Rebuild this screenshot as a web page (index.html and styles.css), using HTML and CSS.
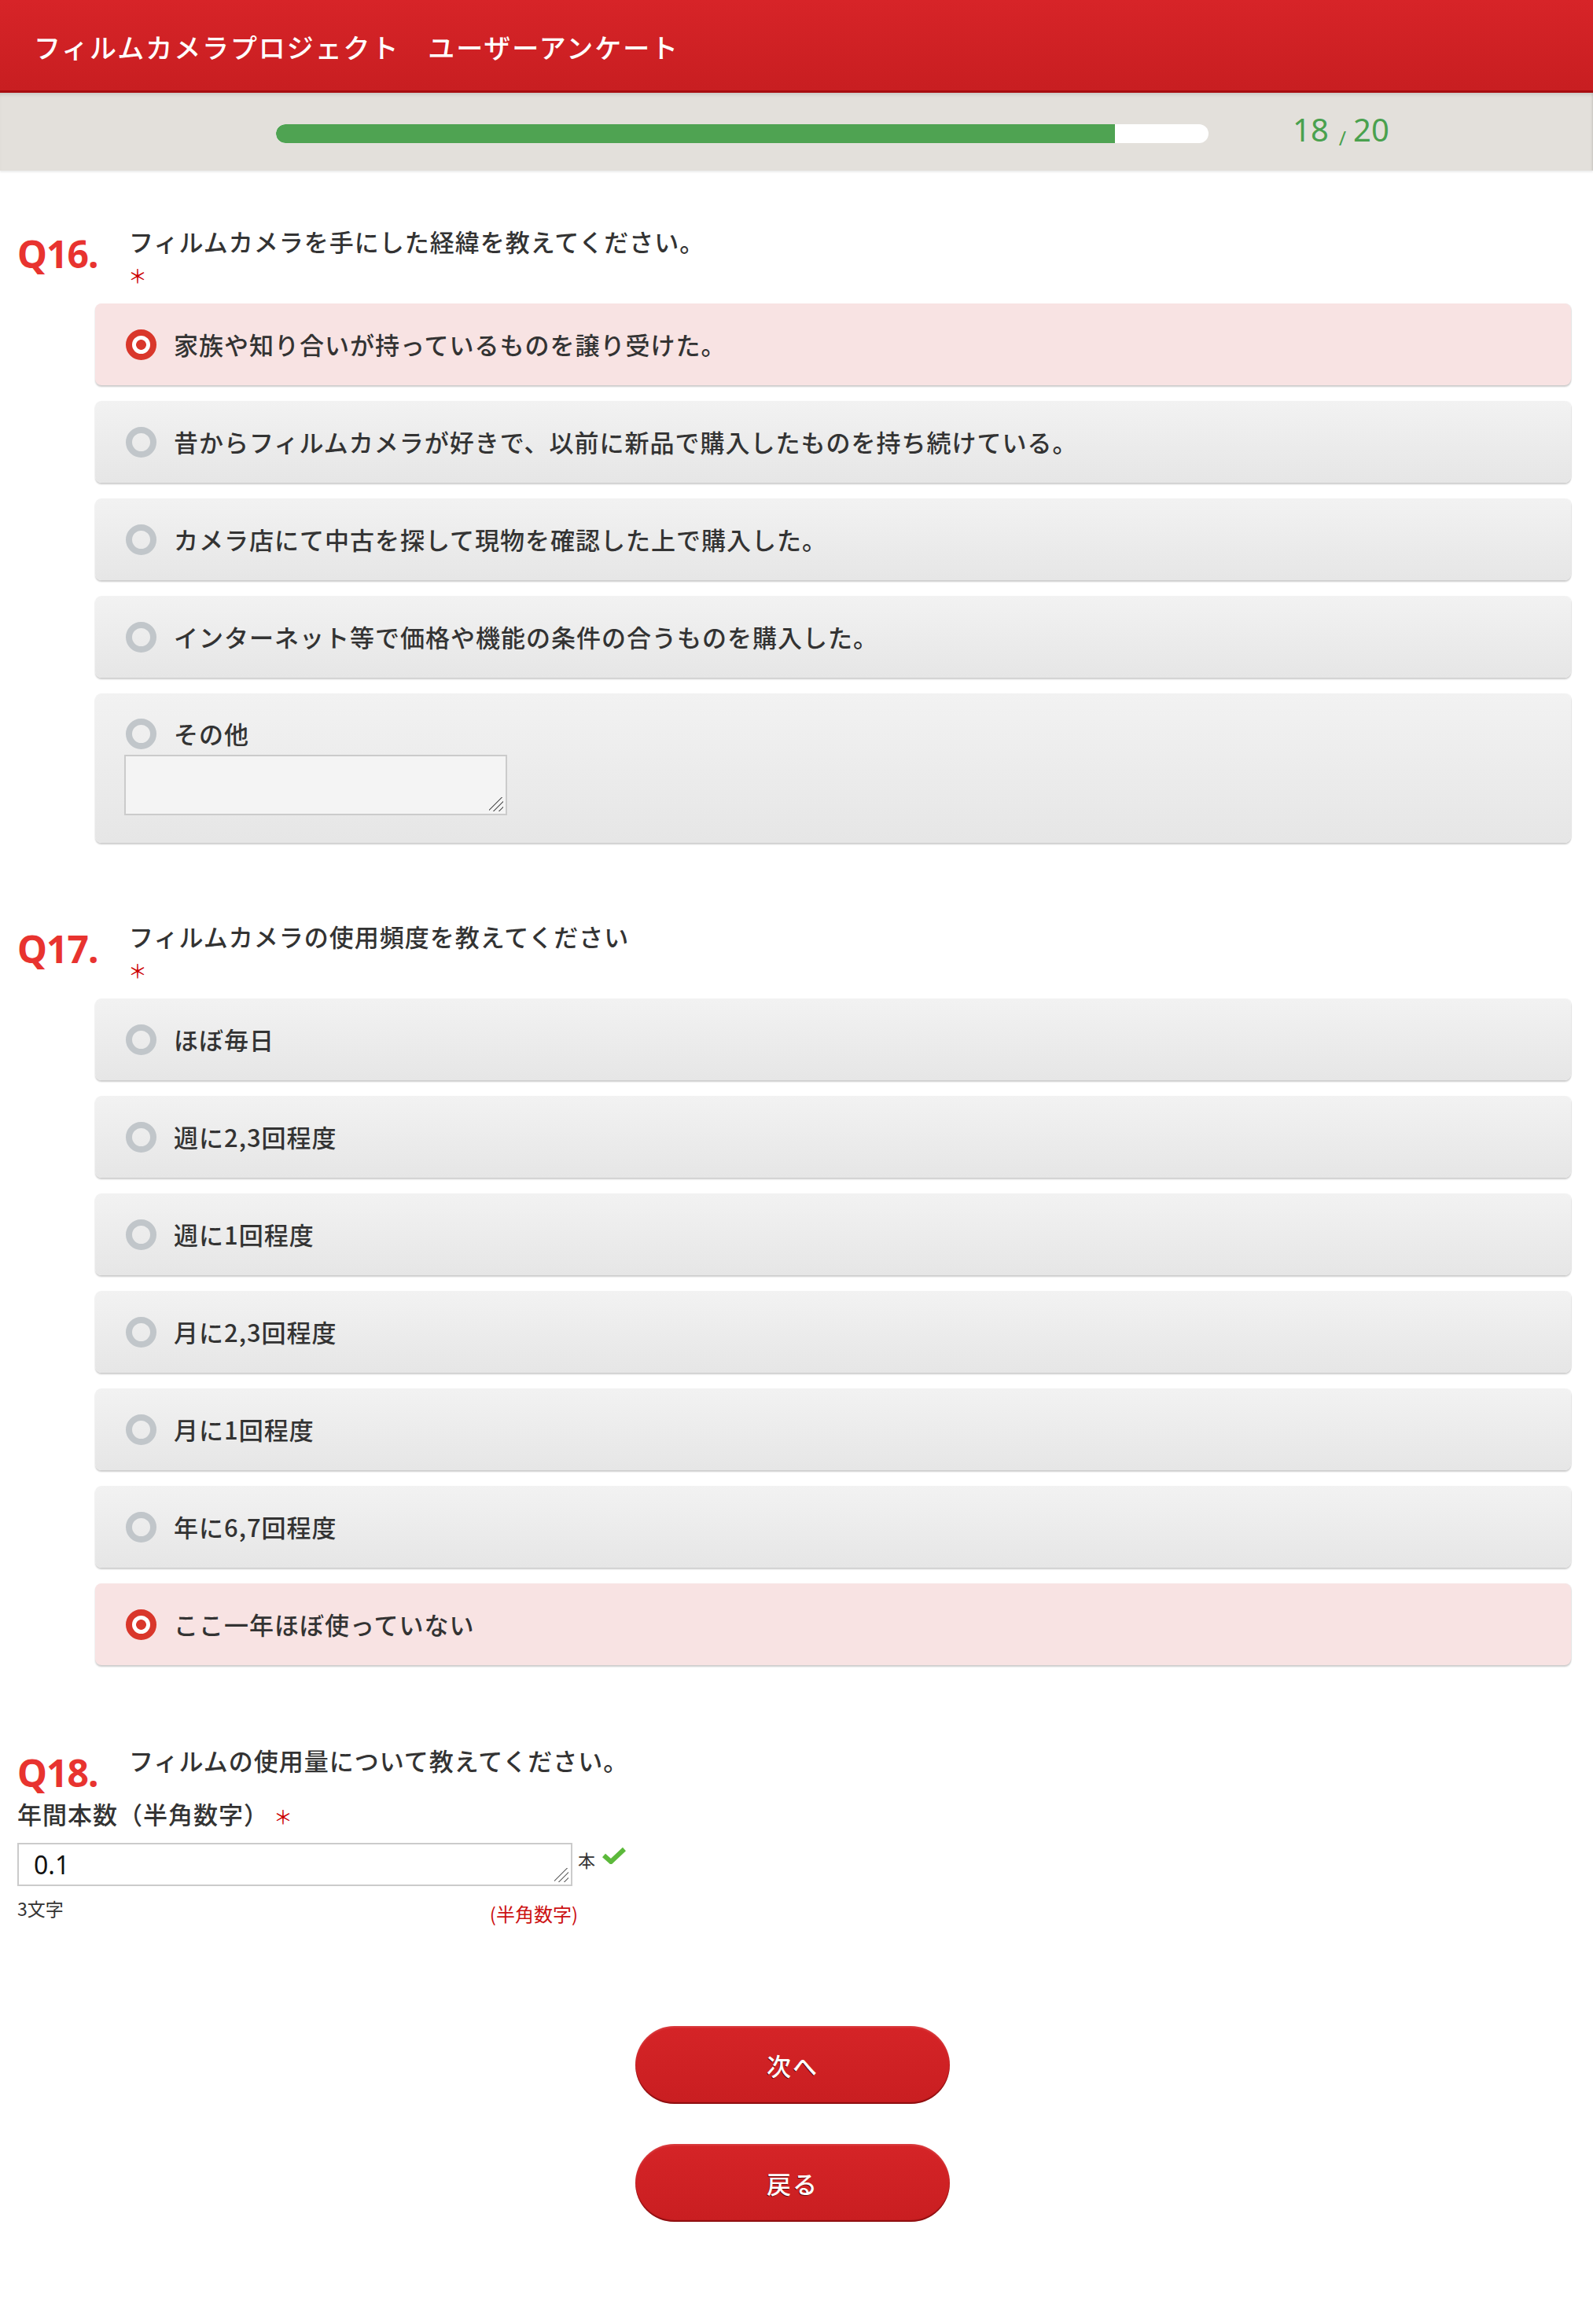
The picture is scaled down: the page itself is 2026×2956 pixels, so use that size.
FILE: index.html
```html
<!DOCTYPE html>
<html lang="ja">
<head>
<meta charset="utf-8">
<title>フィルムカメラプロジェクト ユーザーアンケート</title>
<link rel="stylesheet" href="styles.css">
</head>
<body>
<header class="top">
  <h1 class="title">フィルムカメラプロジェクト　ユーザーアンケート</h1>
</header>
<div class="progress-band">
  <div class="bar"><div class="fill" style="width:90%"></div></div>
  <div class="count">18<span class="slash">/</span>20</div>
</div>

<main class="main">
  <section class="q q-first">
    <div class="q-head">
      <div class="q-num">Q16.</div>
      <div class="q-col">
        <div class="q-text">フィルムカメラを手にした経緯を教えてください。</div>
        <div class="req">＊</div>
      </div>
    </div>
    <div class="options">
      <div class="opt sel"><span class="radio"></span><span class="opt-text">家族や知り合いが持っているものを譲り受けた。</span></div>
      <div class="opt"><span class="radio"></span><span class="opt-text">昔からフィルムカメラが好きで、以前に新品で購入したものを持ち続けている。</span></div>
      <div class="opt"><span class="radio"></span><span class="opt-text">カメラ店にて中古を探して現物を確認した上で購入した。</span></div>
      <div class="opt"><span class="radio"></span><span class="opt-text">インターネット等で価格や機能の条件の合うものを購入した。</span></div>
      <div class="opt opt-other">
        <div class="other-row"><span class="radio"></span><span class="opt-text">その他</span></div>
        <textarea class="other-box"></textarea>
      </div>
    </div>
  </section>

  <section class="q">
    <div class="q-head">
      <div class="q-num">Q17.</div>
      <div class="q-col">
        <div class="q-text">フィルムカメラの使用頻度を教えてください</div>
        <div class="req">＊</div>
      </div>
    </div>
    <div class="options">
      <div class="opt"><span class="radio"></span><span class="opt-text">ほぼ毎日</span></div>
      <div class="opt"><span class="radio"></span><span class="opt-text">週に2,3回程度</span></div>
      <div class="opt"><span class="radio"></span><span class="opt-text">週に1回程度</span></div>
      <div class="opt"><span class="radio"></span><span class="opt-text">月に2,3回程度</span></div>
      <div class="opt"><span class="radio"></span><span class="opt-text">月に1回程度</span></div>
      <div class="opt"><span class="radio"></span><span class="opt-text">年に6,7回程度</span></div>
      <div class="opt sel"><span class="radio"></span><span class="opt-text">ここ一年ほぼ使っていない</span></div>
    </div>
  </section>

  <section class="q q-last">
    <div class="q-head">
      <div class="q-num">Q18.</div>
      <div class="q-col">
        <div class="q-text">フィルムの使用量について教えてください。</div>
      </div>
    </div>
    <div class="sub-label">年間本数（半角数字）<span class="req-inline">＊</span></div>
    <div class="input-row">
      <textarea class="num-box">0.1</textarea>
      <span class="unit">本</span>
      <svg class="check" width="30" height="22" viewBox="0 0 30 22"><polyline points="2,11 11,19 28,3" fill="none" stroke="#5cb93b" stroke-width="6" stroke-linejoin="miter"/></svg>
    </div>
    <div class="hint-row">
      <span class="hint">3文字</span>
      <span class="hint-red">(半角数字)</span>
    </div>
  </section>

  <div class="buttons">
    <button class="btn" type="button">次へ</button>
    <button class="btn" type="button">戻る</button>
  </div>
</main>
</body>
</html>
```

FILE: styles.css
```css
* { box-sizing: border-box; }
html, body { margin: 0; padding: 0; background: #fff; }
body {
  font-family: "Noto Sans CJK JP", "Noto Sans", sans-serif;
  color: #333;
  width: 2026px;
}

.top {
  height: 118px;
  background: linear-gradient(#d72428, #c81e21);
  border-bottom: 3px solid #a80d10;
  display: flex;
  align-items: center;
  padding-left: 43px;
}
.title {
  margin: 0;
  padding-top: 4px;
  font-weight: 500;
  font-size: 34px;
  letter-spacing: 1.9px;
  color: #fff;
}

.progress-band {
  height: 99px;
  background: #e3e0db;
  box-shadow: inset 0 5px 5px -3px rgba(0,0,0,0.12), inset -3px 0 3px -2px rgba(0,0,0,0.12), 0 2px 2px rgba(0,0,0,0.08);
  display: flex;
  align-items: center;
  padding-left: 351px;
  padding-top: 4px;
}
.bar {
  width: 1186px;
  height: 24px;
  border-radius: 12px;
  background: #fff;
  overflow: hidden;
}
.fill {
  height: 100%;
  background: #4fa352;
  border-radius: 12px 0 0 12px;
}
.count {
  margin-left: 107px;
  color: #4aa14e;
  font-family: "Noto Sans", sans-serif;
  font-size: 40px;
  line-height: 42px;
  margin-top: -4px;
}
.slash {
  font-size: 25px;
  margin: 0 9px 0 13px;
  position: relative;
  top: 5px;
}

.main { padding-right: 28px; }
.q { margin-top: 98px; }
.q-first { margin-top: 69px; }
.q-last { margin-top: 100px; }

.q-head {
  display: flex;
  align-items: flex-start;
  padding-left: 22px;
}
.q-num {
  width: 142px;
  flex: none;
  font-family: "Noto Sans", sans-serif;
  font-weight: 700;
  font-size: 48px;
  line-height: 42px;
  padding-top: 16px;
  color: #e8332f;
  letter-spacing: -1px;
}
.q-text {
  font-size: 31px;
  font-weight: 500;
  line-height: 42px;
  letter-spacing: 1px;
}
.req {
  color: #cc0000;
  font-size: 24px;
  line-height: 30px;
  margin-top: 7px;
  margin-left: -1px;
}

.options {
  margin-left: 121px;
  margin-top: 21px;
  display: flex;
  flex-direction: column;
  gap: 20px;
}
.opt {
  min-height: 104px;
  border-radius: 8px;
  background: linear-gradient(#f2f2f2, #e6e6e6);
  box-shadow: 0 2px 2px rgba(0,0,0,0.2), 1px 0 1px rgba(0,0,0,0.06);
  display: flex;
  align-items: center;
  gap: 22px;
  padding-left: 39px;
}
.opt.sel { background: #f8e3e3; }
.radio {
  width: 39px;
  height: 39px;
  flex: none;
  border-radius: 50%;
  border: 8px solid #c1c6ca;
}
.sel .radio {
  border-color: #d9372b;
  background: radial-gradient(circle, #d9372b 0 6px, #fff 6.8px);
}
.opt-text {
  font-size: 31px;
  font-weight: 500;
  letter-spacing: 1px;
  line-height: 42px;
}

.opt-other {
  flex-direction: column;
  align-items: flex-start;
  gap: 0;
  padding: 30px 0 35px 37px;
}
.other-row {
  display: flex;
  align-items: center;
  gap: 22px;
  padding-left: 2px;
}
.other-box, .num-box {
  display: block;
  resize: none;
  border: 2px solid #cbcbcb;
  border-radius: 0;
  outline: none;
  font-family: "Noto Sans", sans-serif;
  background-repeat: no-repeat;
  background-position: right 3px bottom 3px;
  background-size: 18px 18px;
}
.other-box {
  width: 487px;
  height: 77px;
  margin-top: 6px;
  background-color: #f4f4f4;
  background-image: linear-gradient(135deg, transparent 0 42%, #777 42% 48%, transparent 48% 62%, #777 62% 68%, transparent 68% 82%, #777 82% 88%, transparent 88%);
}

.sub-label {
  padding-left: 22px;
  margin-top: 10px;
  font-size: 31px;
  font-weight: 500;
  line-height: 42px;
  letter-spacing: 1px;
}
.req-inline {
  color: #cc0000;
  font-size: 24px;
  font-weight: 400;
  margin-left: 6px;
}
.input-row {
  display: flex;
  align-items: flex-start;
  padding-left: 22px;
  margin-top: 13px;
}
.num-box {
  width: 706px;
  height: 55px;
  padding: 6px 19px;
  font-size: 32px;
  line-height: 40px;
  color: #111;
  background-color: #fff;
  background-image: linear-gradient(135deg, transparent 0 42%, #888 42% 48%, transparent 48% 62%, #888 62% 68%, transparent 68% 82%, #888 82% 88%, transparent 88%);
  overflow: hidden;
}
.unit {
  font-size: 22px;
  line-height: 22px;
  margin-left: 7px;
  margin-top: 10px;
}
.check {
  margin-left: 9px;
  margin-top: 5px;
}
.hint-row {
  display: flex;
  justify-content: space-between;
  align-items: flex-start;
  width: 735px;
  padding-left: 22px;
  margin-top: 15px;
}
.hint {
  font-size: 23px;
  line-height: 26px;
  color: #333;
}
.hint-red {
  font-size: 24px;
  line-height: 26px;
  margin-top: 7px;
  color: #cc1111;
}

.buttons {
  margin-top: 130px;
  padding-left: 18px;
  padding-bottom: 120px;
  display: flex;
  flex-direction: column;
  align-items: center;
  gap: 51px;
}
.btn {
  width: 400px;
  height: 99px;
  border: none;
  border-radius: 50px;
  background: linear-gradient(#d52427, #c91e21);
  box-shadow: inset 0 -2px 1px rgba(90,0,0,0.55), inset 0 2px 2px rgba(255,255,255,0.12);
  color: #fff;
  font-family: "Noto Sans CJK JP", sans-serif;
  font-size: 31px;
  font-weight: 500;
  letter-spacing: 2px;
  text-shadow: -1px 1px 0 rgba(60,0,0,0.7);
  cursor: pointer;
}
```
